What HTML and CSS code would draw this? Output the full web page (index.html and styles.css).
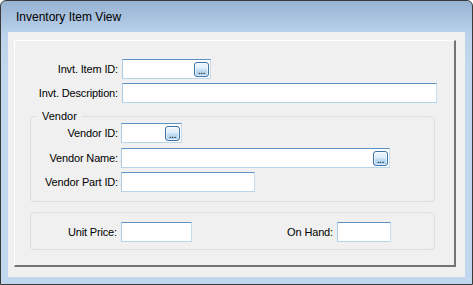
FILE: index.html
```html
<!DOCTYPE html>
<html>
<head>
<meta charset="utf-8">
<link rel="stylesheet" href="styles.css">
</head>
<body>
<div class="window">
  <div class="titlebar">Inventory Item View</div>
  <div class="client">
    <div class="panel">
      <div class="row">
        <span class="lbl lbl-top">Invt. Item ID:</span>
        <div class="tb w-item"><span class="btn">...</span></div>
      </div>
      <div class="row row-gap">
        <span class="lbl lbl-top">Invt. Description:</span>
        <div class="tb w-desc"></div>
      </div>

      <div class="group vendor">
        <span class="legend">Vendor</span>
        <div class="row">
          <span class="lbl lbl-grp">Vendor ID:</span>
          <div class="tb w-vid"><span class="btn">...</span></div>
        </div>
        <div class="row row-gap5">
          <span class="lbl lbl-grp">Vendor Name:</span>
          <div class="tb w-vname"><span class="btn">...</span></div>
        </div>
        <div class="row row-gap">
          <span class="lbl lbl-grp">Vendor Part ID:</span>
          <div class="tb w-vpart"></div>
        </div>
      </div>

      <div class="group prices">
        <div class="row">
          <span class="lbl lbl-price">Unit Price:</span>
          <div class="tb w-price"></div>
          <span class="lbl lbl-hand">On Hand:</span>
          <div class="tb w-hand"></div>
        </div>
      </div>
    </div>
  </div>
</div>
</body>
</html>
```
FILE: styles.css
```css
* { box-sizing: border-box; }
html, body { margin: 0; padding: 0; background: #ffffff; }
body {
  font-family: "Liberation Sans", Arial, sans-serif;
  font-size: 11px;
  color: #000;
}
.window {
  width: 473px;
  height: 285px;
  border: 1px solid #3a3a3a;
  border-radius: 6px 6px 0 0;
  background: linear-gradient(to bottom, #98b3d2 0px, #a9c3e0 18px, #bcd3eb 34px, #c1d7ee 60px, #c1d7ee 100%);
  padding: 0 7px 7px 7px;
  display: flex;
  flex-direction: column;
}
.titlebar {
  height: 31px;
  padding: 9px 0 0 8px;
  font-size: 12px;
  line-height: 14px;
  color: #000;
}
.client {
  flex: 1;
  background: #f0f0f0;
  padding: 8px 0 0 6px;
}
.panel {
  width: 442px;
  height: 227px;
  border-top: 1px solid #ffffff;
  border-left: 1px solid #ffffff;
  border-right: 2px solid #747474;
  border-bottom: 2px solid #747474;
  padding: 18px 0 0 0;
  display: flex;
  flex-direction: column;
}
.row {
  display: flex;
  align-items: center;
  height: 20px;
}
.row-gap { margin-top: 4px; }
.row-gap5 { margin-top: 5px; }
.lbl {
  text-align: right;
  white-space: nowrap;
  line-height: 20px;
  letter-spacing: -0.15px;
}
.lbl-top { width: 103px; margin-right: 4px; }
.lbl-grp { width: 87px; margin-right: 3px; }
.lbl-price { width: 86px; margin-right: 4px; }
.lbl-hand { margin-left: auto; margin-right: 4px; }

.tb {
  height: 20px;
  background: #ffffff;
  border: 1px solid #b7d6ec;
  border-top-color: #5d93c4;
  border-left-color: #a9cbe5;
  border-right-color: #c4def0;
  display: flex;
  align-items: center;
  justify-content: flex-end;
  padding-right: 1px;
}
.w-item { width: 89px; }
.w-desc { width: 315px; }
.w-vid { width: 61px; }
.w-vname { width: 269px; }
.w-vpart { width: 134px; }
.w-price { width: 71px; }
.w-hand { width: 54px; }

.btn {
  width: 15px;
  height: 15px;
  border: 1px solid #3c74a6;
  border-radius: 3px;
  background: linear-gradient(to bottom, #f2f9fe 0%, #dcecf9 45%, #bfdcf2 55%, #a9d0ee 100%);
  box-shadow: inset 0 0 0 1px rgba(255,255,255,0.6);
  font-size: 10px;
  line-height: 10px;
  text-align: center;
  letter-spacing: -0.5px;
  padding-top: 3px;
  color: #000;
}

.group {
  position: relative;
  width: 405px;
  margin-left: 15px;
  border: 1px solid #d5dfe5;
  border-radius: 4px;
}
.vendor {
  margin-top: 13px;
  padding: 6px 0 9px 0;
}
.prices {
  margin-top: 10px;
  padding: 9px 43px 7px 0;
}
.legend {
  position: absolute;
  top: -8px;
  left: 6px;
  padding: 0 5px;
  background: #f0f0f0;
  line-height: 14px;
  font-size: 11px;
}
```
